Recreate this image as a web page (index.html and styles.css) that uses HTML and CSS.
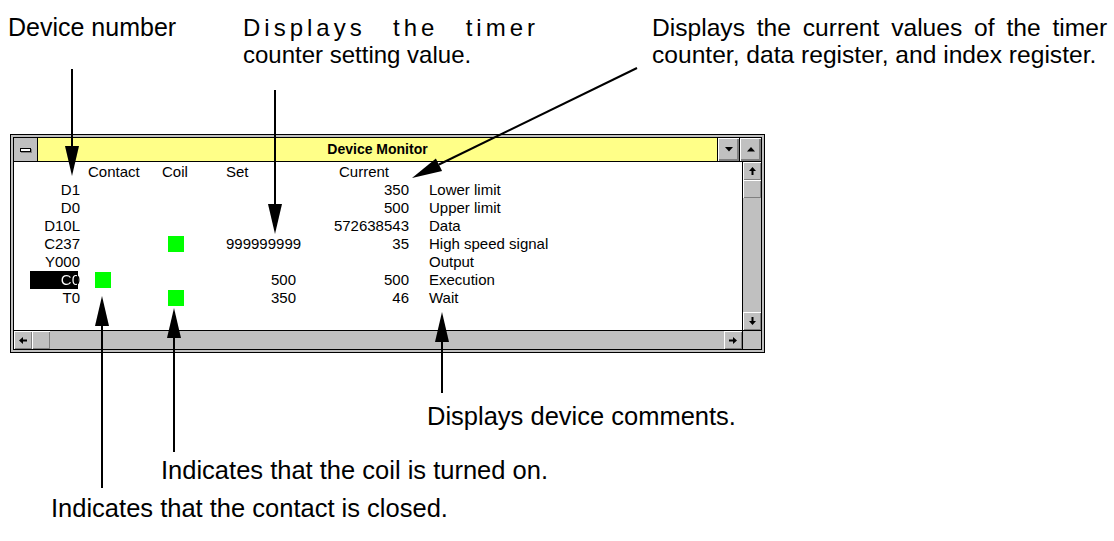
FILE: index.html
```html
<!DOCTYPE html>
<html lang="en">
<head>
  <meta charset="UTF-8">
  <title>Device Monitor</title>
  <link rel="stylesheet" href="styles.css">
</head>
<body>
  <div class="figure">
    <div class="window">
      <div class="frame">
        <div class="titlebar">
          <div class="sysmenu"><span class="dash"></span></div>
          <div class="title">Device Monitor</div>
          <div class="tbtn">
            <svg width="8" height="5" viewBox="0 0 8 5"><polygon points="0,0 8,0 4,4.5" fill="#000"/></svg>
          </div>
          <div class="tbtn">
            <svg width="8" height="5" viewBox="0 0 8 5"><polygon points="0,4.5 8,4.5 4,0" fill="#000"/></svg>
          </div>
        </div>

        <div class="main">
          <div class="content">
            <div class="row head">
              <div class="c-name"></div>
              <div class="c-contact">Contact</div>
              <div class="c-coil">Coil</div>
              <div class="c-set left">Set</div>
              <div class="c-cur left">Current</div>
              <div class="c-cmt"></div>
            </div>
            <div class="row">
              <div class="c-name">D1</div>
              <div class="c-contact"></div>
              <div class="c-coil"></div>
              <div class="c-set"></div>
              <div class="c-cur">350</div>
              <div class="c-cmt">Lower limit</div>
            </div>
            <div class="row">
              <div class="c-name">D0</div>
              <div class="c-contact"></div>
              <div class="c-coil"></div>
              <div class="c-set"></div>
              <div class="c-cur">500</div>
              <div class="c-cmt">Upper limit</div>
            </div>
            <div class="row">
              <div class="c-name">D10L</div>
              <div class="c-contact"></div>
              <div class="c-coil"></div>
              <div class="c-set"></div>
              <div class="c-cur">572638543</div>
              <div class="c-cmt">Data</div>
            </div>
            <div class="row">
              <div class="c-name">C237</div>
              <div class="c-contact"></div>
              <div class="c-coil"><span class="lamp"></span></div>
              <div class="c-set">999999999</div>
              <div class="c-cur">35</div>
              <div class="c-cmt">High speed signal</div>
            </div>
            <div class="row">
              <div class="c-name">Y000</div>
              <div class="c-contact"></div>
              <div class="c-coil"></div>
              <div class="c-set"></div>
              <div class="c-cur"></div>
              <div class="c-cmt">Output</div>
            </div>
            <div class="row">
              <div class="c-name"><span class="sel"><span class="sel-text">C0</span></span></div>
              <div class="c-contact"><span class="lamp"></span></div>
              <div class="c-coil"></div>
              <div class="c-set">500</div>
              <div class="c-cur">500</div>
              <div class="c-cmt">Execution</div>
            </div>
            <div class="row">
              <div class="c-name">T0</div>
              <div class="c-contact"></div>
              <div class="c-coil"><span class="lamp"></span></div>
              <div class="c-set">350</div>
              <div class="c-cur">46</div>
              <div class="c-cmt">Wait</div>
            </div>
          </div>

          <div class="vscroll">
            <div class="sbtn">
              <svg width="7" height="8" viewBox="0 0 7 8"><polygon points="3.5,0 7,4 4.5,4 4.5,8 2.5,8 2.5,4 0,4" fill="#000"/></svg>
            </div>
            <div class="thumb"></div>
            <div class="track"></div>
            <div class="sbtn">
              <svg width="7" height="8" viewBox="0 0 7 8"><polygon points="3.5,8 7,4 4.5,4 4.5,0 2.5,0 2.5,4 0,4" fill="#000"/></svg>
            </div>
          </div>
        </div>

        <div class="hscroll">
          <div class="sbtn">
            <svg width="8" height="7" viewBox="0 0 8 7"><polygon points="0,3.5 4,0 4,2.5 8,2.5 8,4.5 4,4.5 4,7" fill="#000"/></svg>
          </div>
          <div class="thumb"></div>
          <div class="track"></div>
          <div class="sbtn">
            <svg width="8" height="7" viewBox="0 0 8 7"><polygon points="8,3.5 4,0 4,2.5 0,2.5 0,4.5 4,4.5 4,7" fill="#000"/></svg>
          </div>
          <div class="corner"></div>
        </div>
      </div>
    </div>

    <!-- callouts -->
    <div class="note note-device">Device number</div>
    <div class="note note-set">
      <div class="spread"><span>Displays</span><span>the</span><span>timer</span></div>
      <div>counter setting value.</div>
    </div>
    <div class="note note-current">
      <div class="stretch">Displays the current values of the timer</div>
      <div>counter, data register, and index register.</div>
    </div>
    <div class="note note-comment">Displays device comments.</div>
    <div class="note note-coil">Indicates that the coil is turned on.</div>
    <div class="note note-contact">Indicates that the contact is closed.</div>

    <svg class="arrows" width="1114" height="541" viewBox="0 0 1114 541">
      <g stroke="#000" stroke-width="2">
        <line x1="72" y1="69" x2="72" y2="150"/>
        <line x1="275" y1="90" x2="275" y2="208"/>
        <line x1="637" y1="68" x2="439" y2="164.5"/>
        <line x1="442" y1="393" x2="442" y2="338"/>
        <line x1="174" y1="452" x2="174" y2="334"/>
        <line x1="102" y1="488" x2="102" y2="322"/>
      </g>
      <g fill="#000">
        <polygon points="65,146 79,146 72,176"/>
        <polygon points="268,204 282,204 275,234"/>
        <polygon points="442.1,171.1 435.9,158.6 412,178"/>
        <polygon points="435,342 449,342 442,312"/>
        <polygon points="167,338 181,338 174,308"/>
        <polygon points="95,326 109,326 102,296"/>
      </g>
    </svg>
  </div>
</body>
</html>
```

FILE: styles.css
```css
* {
  box-sizing: border-box;
}
body {
  margin: 0;
  background: #fff;
  font-family: 'Liberation Sans', Arial, sans-serif;
  color: #000;
}
.figure {
  position: relative;
  width: 1114px;
  height: 541px;
  padding: 134px 0 0 10px;
}

/* window */
.window {
  width: 755px;
  height: 219px;
  border: 1px solid #000;
  background: #c0c0c0;
  padding: 2px;
  font-size: 15px;
}
.frame {
  height: 100%;
  border: 1px solid #000;
  display: flex;
  flex-direction: column;
  background: #fff;
}
.titlebar {
  display: flex;
  height: 24px;
  border-bottom: 1px solid #000;
  flex: none;
}
.sysmenu {
  width: 24px;
  background: #c0c0c0;
  border-right: 1px solid #000;
  display: flex;
  align-items: center;
  justify-content: center;
}
.dash {
  width: 11px;
  height: 4px;
  background: #fff;
  border: 1px solid #000;
  box-shadow: 1px 1px 0 #808080;
}
.title {
  flex: 1;
  background: #ffff88;
  text-align: center;
  font-weight: bold;
  font-size: 14px;
  line-height: 23px;
}
.tbtn {
  width: 22px;
  border-left: 1px solid #000;
  background: #c0c0c0;
  box-shadow: inset 1px 1px 0 #fff, inset -1px -1px 0 #808080, inset -2px -2px 0 #808080;
  display: flex;
  align-items: center;
  justify-content: center;
}

.main {
  flex: 1;
  display: flex;
  min-height: 0;
}
.content {
  flex: 1;
  padding-top: 1px;
}
.row {
  display: grid;
  grid-template-columns: 66px 82px 64px 70px 113px 1fr;
  height: 18px;
  line-height: 18px;
  white-space: nowrap;
}
.c-name {
  text-align: right;
}
.c-contact {
  padding-left: 8px;
}
.c-set,
.c-cur {
  text-align: right;
}
.c-set.left,
.c-cur.left {
  text-align: left;
}
.c-cur.left {
  padding-left: 43px;
}
.c-cmt {
  padding-left: 20px;
}
.lamp {
  display: inline-block;
  width: 16px;
  height: 16px;
  background: #00ff00;
  vertical-align: top;
  margin-top: 1px;
}
.c-contact .lamp {
  margin-left: 7px;
}
.c-coil .lamp {
  margin-left: 6px;
}
.sel {
  display: block;
  margin-left: 16px;
  background: linear-gradient(to right, #000 0 48px, transparent 48px);
}
.sel-text {
  color: transparent;
  background: linear-gradient(to right, #fff 0 16px, #000 16px);
  -webkit-background-clip: text;
  background-clip: text;
}

/* scroll bars */
.vscroll {
  width: 19px;
  border-left: 1px solid #000;
  display: flex;
  flex-direction: column;
  background: #c0c0c0;
}
.hscroll {
  height: 19px;
  border-top: 1px solid #000;
  display: flex;
  background: #c0c0c0;
  flex: none;
}
.sbtn,
.thumb {
  flex: none;
  width: 18px;
  height: 18px;
  background: #c0c0c0;
  box-shadow: inset 1px 1px 0 #fff, inset -1px -1px 0 #808080, inset 0 0 0 1px #000;
  display: flex;
  align-items: center;
  justify-content: center;
}
.track {
  flex: 1;
  background: #c0c0c0;
}
.corner {
  width: 19px;
  border-left: 1px solid #000;
  background: #c0c0c0;
}

/* callouts */
.note {
  position: absolute;
  font-size: 25px;
  line-height: 27px;
  white-space: nowrap;
}
.note-device {
  left: 8px;
  top: 14px;
}
.note-set {
  left: 243px;
  top: 14px;
  font-family: 'Liberation Sans Narrow', 'Liberation Sans', Arial, sans-serif;
  font-size: 24px;
}
.spread {
  display: flex;
  justify-content: space-between;
  width: 296px;
  letter-spacing: 4px;
}
.note-current {
  left: 652px;
  top: 14px;
  font-size: 24.6px;
}
.stretch {
  word-spacing: 5px;
}
.note-comment {
  left: 427px;
  top: 403px;
  font-size: 25.5px;
  line-height: 26px;
}
.note-coil {
  left: 161px;
  top: 457px;
  font-size: 25.5px;
  line-height: 26px;
}
.note-contact {
  left: 51px;
  top: 495px;
  font-size: 25.5px;
  line-height: 26px;
}
.arrows {
  position: absolute;
  left: 0;
  top: 0;
  pointer-events: none;
}
```
